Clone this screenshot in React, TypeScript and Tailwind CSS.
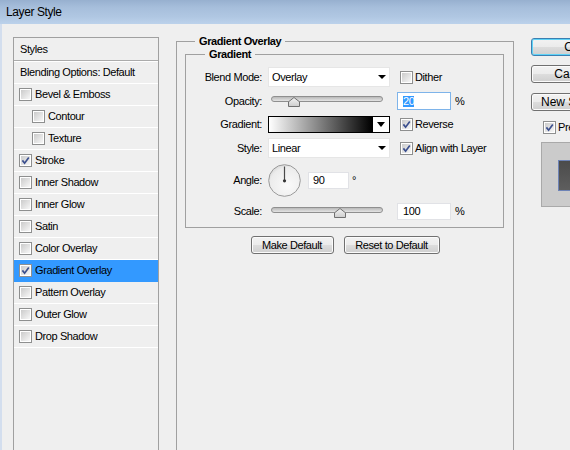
import React from "react";

function Box({ checked = false, className = "" }: { checked?: boolean; className?: string }) {
  return (
    <span className={`relative flex shrink-0 w-[13px] h-[13px] border border-[#8e8f8f] bg-white p-[1px] ${className}`}>
      <span className="flex-1 bg-[linear-gradient(135deg,#cbcbcb,#f7f7f7)]" />
      {checked && (
        <svg className="absolute left-0 top-0" width="11" height="11" viewBox="0 0 11 11">
          <path d="M2.4 5.4 L4.6 8.2 L8.8 2.4" fill="none" stroke="#3b4f8e" strokeWidth="1.7" />
        </svg>
      )}
    </span>
  );
}

function Tri({ w = 8, h = 4 }: { w?: number; h?: number }) {
  return (
    <svg width={w} height={h} viewBox={`0 0 ${w} ${h}`}>
      <polygon points={`0,0 ${w},0 ${w / 2},${h}`} fill="#000" />
    </svg>
  );
}

function Dropdown({ value, className = "" }: { value: string; className?: string }) {
  return (
    <div className={`w-[122px] h-[20px] shrink-0 bg-white border border-[#e6e6e6] flex items-center justify-between pl-[3px] pr-[3px] ${className}`}>
      <span>{value}</span>
      <Tri />
    </div>
  );
}

function Slider({ thumb }: { thumb: "a" | "b" }) {
  return (
    <div className="ml-[6px] w-[122px] shrink-0 self-start pt-[4px] pl-[3px]">
      <div className="relative w-[112px] h-[6px] rounded-full border border-[#8f8f8f] bg-[linear-gradient(#b9b9b9,#e4e4e4)]">
        <svg
          className={`absolute top-0 ${thumb === "a" ? "left-[16px]" : "left-[62px]"}`}
          width="12"
          height="10"
          viewBox="0 0 12 10"
        >
          <defs>
            <linearGradient id={`tg${thumb}`} x1="0" y1="0" x2="0" y2="1">
              <stop offset="0" stopColor="#f4f4f4" />
              <stop offset="1" stopColor="#cdcdcd" />
            </linearGradient>
          </defs>
          <polygon points="6,0.5 11.5,4.8 11.5,9.5 0.5,9.5 0.5,4.8" fill={`url(#tg${thumb})`} stroke="#707070" strokeWidth="1" />
        </svg>
      </div>
    </div>
  );
}

function Btn({ children, className = "", ok = false, w = "" }: { children: React.ReactNode; className?: string; ok?: boolean; w?: string }) {
  return (
    <div
      className={`h-[18px] shrink-0 rounded-[3px] border flex items-center justify-center bg-[linear-gradient(#f2f2f2_0%,#ebebeb_50%,#dddddd_50%,#cfcfcf_100%)] ${
        ok ? "border-[#3c7fb1] shadow-[inset_0_0_0_1px_#5fd3f7]" : "border-[#707070] shadow-[inset_0_0_0_1px_#fbfbfb]"
      } ${w} ${className}`}
    >
      {children}
    </div>
  );
}

const items: { label: string; sub?: boolean; checked?: boolean; active?: boolean }[] = [
  { label: "Bevel & Emboss" },
  { label: "Contour", sub: true },
  { label: "Texture", sub: true },
  { label: "Stroke", checked: true },
  { label: "Inner Shadow" },
  { label: "Inner Glow" },
  { label: "Satin" },
  { label: "Color Overlay" },
  { label: "Gradient Overlay", checked: true, active: true },
  { label: "Pattern Overlay" },
  { label: "Outer Glow" },
  { label: "Drop Shadow" },
];

export default function App() {
  return (
    <div className="w-[570px] h-[450px] overflow-hidden bg-[#efefef] font-['Liberation_Sans',Arial,sans-serif] text-[11px] tracking-[-0.4px] text-black flex flex-col">
      <div className="h-[24px] shrink-0 flex items-center pl-[6px] text-[12px] bg-[linear-gradient(#97b0cf_0%,#a6bedb_30%,#b0c7e2_70%,#bcd2eb_100%)]">
        Layer Style
      </div>
      <div className="flex flex-1 border-l-2 border-[#d3deee] overflow-hidden">
        {/* Left styles list */}
        <div className="ml-[11px] mt-[13px] w-[146px] h-[430px] shrink-0 border border-[#a0a0a0] flex flex-col">
          <div className="h-[23px] shrink-0 border-b border-[#ababab] flex items-center pl-[6px]">Styles</div>
          <div className="h-[23px] shrink-0 border-t border-b border-white flex items-center pl-[6px]">Blending Options: Default</div>
          {items.map((it) => (
            <div
              key={it.label}
              className={`h-[22px] shrink-0 border-b flex items-center gap-[3px] ${
                it.active ? "bg-[#3399ff] border-[#3399ff]" : "border-white"
              } ${it.sub ? "pl-[18px]" : "pl-[5px]"}`}
            >
              <Box checked={!!it.checked} />
              <span>{it.label}</span>
            </div>
          ))}
        </div>

        {/* Middle settings */}
        <div className="ml-[17px] mt-[11px] w-[338px] shrink-0">
          <fieldset className="border border-[#a0a0a0] h-[430px] pl-[8px]">
            <legend className="ml-[10px] px-[4px] font-bold leading-[13px]">Gradient Overlay</legend>
            <fieldset className="w-[319px] border border-[#a0a0a0] pb-[7px]">
              <legend className="ml-[19px] px-[4px] font-bold leading-[13px]">Gradient</legend>
              <div className="flex flex-col">
                <div className="mt-[6px] h-[20px] flex items-center">
                  <span className="w-[76px] shrink-0 text-right">Blend Mode:</span>
                  <Dropdown value="Overlay" className="ml-[6px]" />
                  <Box className="ml-[10px]" />
                  <span className="ml-[2px]">Dither</span>
                </div>
                <div className="mt-[5px] h-[18px] flex items-center">
                  <span className="w-[76px] shrink-0 text-right">Opacity:</span>
                  <Slider thumb="a" />
                  <div className="ml-[7px] w-[54px] h-[18px] shrink-0 border border-[#7eb4ea] bg-white flex items-center pl-[5px]">
                    <span className="bg-[#3399ff] text-white leading-[11px]">20</span>
                  </div>
                  <span className="ml-[4px]">%</span>
                </div>
                <div className="mt-[6px] h-[17px] flex items-center">
                  <span className="w-[76px] shrink-0 text-right">Gradient:</span>
                  <div className="ml-[6px] w-[122px] h-[17px] shrink-0 flex border border-black">
                    <div className="flex-1 bg-[linear-gradient(to_right,#ffffff,#000000)]" />
                    <div className="w-[17px] border-l border-black bg-white flex items-center justify-center">
                      <Tri w={8} h={5} />
                    </div>
                  </div>
                  <Box checked className="ml-[10px]" />
                  <span className="ml-[2px]">Reverse</span>
                </div>
                <div className="mt-[5px] h-[20px] flex items-center">
                  <span className="w-[76px] shrink-0 text-right">Style:</span>
                  <Dropdown value="Linear" className="ml-[6px]" />
                  <Box checked className="ml-[10px]" />
                  <span className="ml-[2px] whitespace-nowrap">Align with Layer</span>
                </div>
                <div className="mt-[6px] h-[33px] flex items-center">
                  <span className="w-[76px] shrink-0 text-right">Angle:</span>
                  <svg className="ml-[6px] shrink-0" width="33" height="33" viewBox="0 0 33 33">
                    <defs>
                      <radialGradient id="dial" cx="0.6" cy="0.65" r="0.7">
                        <stop offset="0" stopColor="#fafafa" />
                        <stop offset="0.8" stopColor="#ececec" />
                        <stop offset="1" stopColor="#d6d6d6" />
                      </radialGradient>
                    </defs>
                    <circle cx="16.5" cy="16.5" r="15.8" fill="url(#dial)" stroke="#9a9a9a" strokeWidth="1" />
                    <line x1="16.5" y1="16.5" x2="16.5" y2="2.5" stroke="#4a4a4a" strokeWidth="1.2" />
                    <circle cx="16.5" cy="16.8" r="1.6" fill="#333" />
                  </svg>
                  <div className="ml-[7px] w-[41px] h-[17px] shrink-0 border border-[#e1e2e6] bg-white flex items-center pl-[4px]">90</div>
                  <span className="ml-[3px]">°</span>
                </div>
                <div className="mt-[6px] h-[17px] flex items-center">
                  <span className="w-[76px] shrink-0 text-right">Scale:</span>
                  <Slider thumb="b" />
                  <div className="ml-[7px] w-[54px] h-[17px] shrink-0 border border-[#e1e2e6] bg-white flex items-center pl-[5px]">100</div>
                  <span className="ml-[4px]">%</span>
                </div>
              </div>
            </fieldset>
            <div className="mt-[8px] pr-[8px] flex justify-center gap-[10px]">
              <Btn w="w-[83px]">Make Default</Btn>
              <Btn w="w-[96px]">Reset to Default</Btn>
            </div>
          </fieldset>
        </div>

        {/* Right buttons */}
        <div className="ml-[17px] mt-[14px] w-[84px] shrink-0 flex flex-col text-[12px] tracking-normal">
          <Btn ok>OK</Btn>
          <Btn className="mt-[9px]">Cancel</Btn>
          <Btn className="mt-[10px]">New Style...</Btn>
          <div className="mt-[10px] h-[13px] flex items-center pl-[12px] text-[11px] tracking-[-0.4px]">
            <Box checked />
            <span className="ml-[2px]">Preview</span>
          </div>
          <div className="mt-[8px] ml-[10px] h-[65px] w-[64px] shrink-0 border border-[#a9a9a9] bg-[#cbcbcb] pt-[17px] pl-[16px]">
            <div className="h-[31px] w-[40px] border border-[#6d83b6] bg-[linear-gradient(#4b4b4b,#5e5e5e)]" />
          </div>
        </div>
      </div>
    </div>
  );
}
